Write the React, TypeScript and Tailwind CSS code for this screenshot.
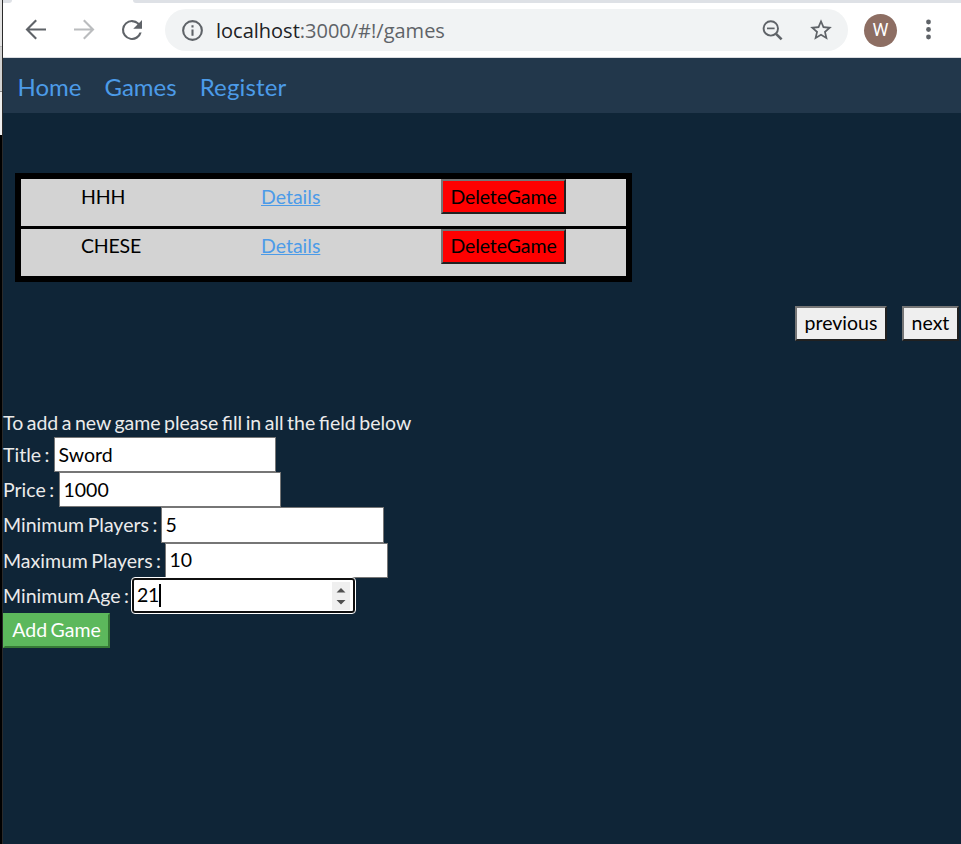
import React from "react";

const games = [
  { name: "HHH", pad: "pt-[3px]", btn: "pb-0" },
  { name: "CHESE", pad: "pt-[2px]", btn: "pb-[2px]" },
];

const fields = [
  { label: "Title :", value: "Sword", row: "h-[35px]", gap: "w-[51px]", box: "w-[222px]" },
  { label: "Price :", value: "1000", row: "h-[35px]", gap: "w-[56px]", box: "w-[222px]" },
  { label: "Minimum Players :", value: "5", row: "h-[36px]", gap: "w-[158px]", box: "w-[223px] pb-px" },
  { label: "Maximum Players :", value: "10", row: "h-[35px]", gap: "w-[162px]", box: "w-[223px] pb-px" },
];

function Toolbar() {
  return (
    <div className="flex h-[58px] flex-col border-b border-[#dadce0] bg-white">
      <div className="flex h-[3px] shrink-0">
        <div className="w-[9px] rounded-br-[9px] bg-[#dee1e6]" />
        <div className="w-[121px]" />
        <div className="flex-1 rounded-bl-[9px] bg-[#dee1e6]" />
      </div>
      <div className="flex h-[54px] items-center">
        <svg className="ml-[19px] h-7 w-7" viewBox="0 0 28 28" fill="none" stroke="#5f6368" strokeWidth="2.1">
          <path d="M24 13.5H5.5M14.2 4.3 5 13.5l9.2 9.2" />
        </svg>
        <svg className="ml-[20px] h-7 w-7" viewBox="0 0 28 28" fill="none" stroke="#babcbe" strokeWidth="2.1">
          <path d="M4 13.5h18.5M13.8 4.3 23 13.5l-9.2 9.2" />
        </svg>
        <svg className="ml-[19px] h-[30px] w-[30px]" viewBox="0 0 24 24" fill="#5f6368">
          <path d="M17.65 6.35A7.96 7.96 0 0 0 12 4a8 8 0 1 0 7.73 10h-1.8A6.3 6.3 0 1 1 12 5.7c1.72 0 3.28.72 4.42 1.88L13 11h7V4z" />
        </svg>
        <div className="ml-[18px] flex h-[42px] w-[683px] items-center rounded-full bg-[#f1f3f4]">
          <svg className="ml-[15px] h-[25px] w-[25px]" viewBox="0 0 24 24" fill="#5f6368">
            <path d="M11 7h2v2h-2zm0 4h2v6h-2zm1-9a10 10 0 1 0 0 20 10 10 0 0 0 0-20zm0 18a8 8 0 1 1 0-16 8 8 0 0 1 0 16z" />
          </svg>
          <span className="ml-[11px] w-[300px] whitespace-nowrap pt-px font-['Open_Sans',sans-serif] text-[20px] text-[#5f6368]">
            <span className="text-[#202124]">localhost</span>:3000/#!/games
          </span>
          <div className="flex-1" />
          <svg className="h-[27px] w-[27px]" viewBox="0 0 27 27" fill="none" stroke="#5f6368">
            <circle cx="10.8" cy="11.4" r="7.2" strokeWidth="1.9" />
            <path d="M7 11.4h7.6" strokeWidth="1.7" />
            <path d="m16 16.8 5.6 5.6" strokeWidth="2.6" />
          </svg>
          <svg className="ml-[20.5px] mr-[14.5px] h-[26px] w-[26px]" viewBox="0 0 24 24" fill="#5f6368">
            <path d="m22 9.24-7.19-.62L12 2 9.19 8.63 2 9.24l5.46 4.73L5.82 21 12 17.27 18.18 21l-1.63-7.03zM12 15.4l-3.76 2.27 1-4.28-3.32-2.88 4.38-.38L12 6.1l1.71 4.04 4.38.38-3.32 2.88 1 4.28z" />
          </svg>
        </div>
        <div className="ml-[16px] flex h-[33px] w-[33px] items-center justify-center rounded-full bg-[#8d6e63] font-['Roboto',sans-serif] text-[18px] text-white">
          W
        </div>
        <svg className="ml-[16px] h-[30px] w-[30px]" viewBox="0 0 30 30" fill="#5f6368">
          <circle cx="15.5" cy="7" r="2.4" />
          <circle cx="15.5" cy="14.5" r="2.4" />
          <circle cx="15.5" cy="22" r="2.4" />
        </svg>
      </div>
    </div>
  );
}

const bevel = "border-2 border-t-[#767676] border-l-[#767676] border-r-[#212121] border-b-[#212121]";

export default function App() {
  return (
    <div className="flex h-[844px] w-[961px] overflow-hidden bg-[#0f2537] font-['Lato',sans-serif] text-[19.5px] leading-[30px]">
      <div className="flex w-[3px] shrink-0 flex-col border-r border-[#2b2b2b] bg-black">
        <div className="h-[46px] bg-[#e4e4e4]" />
        <div className="h-[45px] border-t border-[#bbbbbb] bg-[#d2d2d2]" />
        <div className="h-[44px] border-t border-[#888888] bg-[#eeeeee]" />
      </div>
      <div className="flex min-w-0 flex-1 flex-col">
        <Toolbar />
        <nav className="flex h-[55px] shrink-0 items-center gap-[23px] bg-[#22374b] pl-[14.5px] pt-[3px] text-[24px] text-[#4c9be8]">
          <a>Home</a>
          <a>Games</a>
          <a className="tracking-[0.15px]">Register</a>
        </nav>
        <div className="ml-[12px] mt-[60px] h-[109px] w-[617px] shrink-0 divide-y-[3px] divide-black border-[6px] border-black bg-[#d3d3d3] text-black">
          {games.map((g) => (
            <div key={g.name} className="flex h-[50px] items-start last:h-[47px]">
              <span className={"ml-[60px] w-[180px] tracking-[-0.2px] " + g.pad}>{g.name}</span>
              <span className={"w-[180px] text-[#4c9be8] underline " + g.pad}>Details</span>
              <button className={"flex h-[35px] w-[125px] items-center justify-center bg-[red] tracking-[-0.1px] " + g.btn + " " + bevel}>DeleteGame</button>
            </div>
          ))}
        </div>
        <div className="mt-[24px] flex justify-end gap-[15px] pr-[2px] text-black">
          <button className={"flex h-[35px] w-[92px] items-center justify-center bg-[#efefef] pb-[2px] " + bevel}>previous</button>
          <button className={"flex h-[35px] w-[57px] items-center justify-center bg-[#efefef] pb-[2px] " + bevel}>next</button>
        </div>
        <form className="mt-[67px] text-[#ebebeb] [word-spacing:-1.5px]">
          <div className="h-[29px] whitespace-nowrap">To add a new game please fill in all the field below</div>
          {fields.map((f) => (
            <div key={f.label} className={"flex items-center " + f.row}>
              <span className={"shrink-0 whitespace-nowrap " + f.gap}>{f.label}</span>
              <div className={"flex h-full items-center border border-[#767676] bg-white pl-[3.5px] text-black " + f.box}>{f.value}</div>
            </div>
          ))}
          <div className="flex h-[35px] items-center">
            <span className="w-[128px] shrink-0 whitespace-nowrap pt-px">Minimum Age :</span>
            <div className="-my-px flex h-[37px] w-[225px] items-center rounded-[4px] border border-white bg-[#101010] p-[2px]">
              <div className="flex h-full flex-1 items-center rounded-[1px] bg-white pl-[3px] text-black">
                <span className="pb-px tracking-[-0.3px]">21</span>
                <div className="h-[23px] w-[2px] bg-black" />
                <div className="flex-1" />
                <svg className="mr-[3px] h-[28px] w-[18px] bg-[#efefef]" viewBox="0 0 18 28" fill="#505050">
                  <path d="M4.5 10.5h9L9 6zM4.5 18h9L9 22.5z" />
                </svg>
              </div>
            </div>
          </div>
          <button type="button" className="flex h-[35px] w-[107px] items-center justify-center border-2 border-b-[#357935] border-l-[#5cb85c] border-r-[#357935] border-t-[#5cb85c] bg-[#5cb85c] pb-[2px] text-white [word-spacing:-1.5px]">
            Add Game
          </button>
        </form>
      </div>
    </div>
  );
}
